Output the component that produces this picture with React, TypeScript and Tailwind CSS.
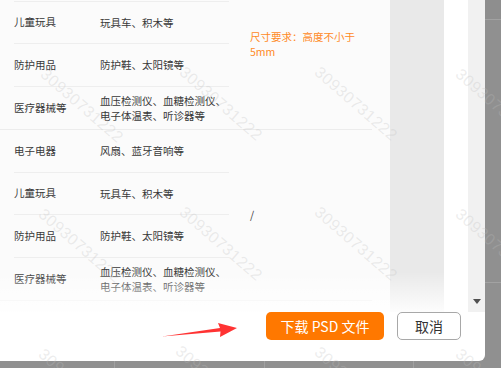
import React from "react";

type Item = { name: string; lines: string[] };

const rows: Item[] = [
  { name: "电子电器", lines: ["风扇、蓝牙音响等"] },
  { name: "儿童玩具", lines: ["玩具车、积木等"] },
  { name: "防护用品", lines: ["防护鞋、太阳镜等"] },
  { name: "医疗器械等", lines: ["血压检测仪、血糖检测仪、", "电子体温表、听诊器等"] },
];

const marks = [
  { x: 48, y: 66 },
  { x: 187, y: 64 },
  { x: 322, y: 64 },
  { x: 463, y: 66 },
  { x: 46, y: 206 },
  { x: 187, y: 204 },
  { x: 322, y: 204 },
  { x: 463, y: 206 },
  { x: 46, y: 346 },
  { x: 183, y: 343 },
  { x: 322, y: 344 },
  { x: 463, y: 346 },
];

const Group = ({ children, first }: { children: React.ReactNode; first?: boolean }) => (
  <div className={`flex border-b border-[#ececec] ${first ? "mt-[-41px]" : ""}`}>
    <div className="ml-[14px] w-[215px] flex flex-col">
      {rows.map((r, i) => (
        <div
          key={i}
          className={`h-[42.5px] flex items-center ${i < rows.length - 1 ? "border-b border-[#eeeeee]" : ""}`}
        >
          <div className="w-[86px] shrink-0">{r.name}</div>
          <div className="flex flex-col leading-[15px]">
            {r.lines.map((l, j) => (
              <span key={j}>{l}</span>
            ))}
          </div>
        </div>
      ))}
    </div>
    <div className="flex-1 flex items-center pl-[21px]">{children}</div>
  </div>
);

export default function App() {
  return (
    <div className="relative w-[501px] h-[368px] overflow-hidden bg-[#909090] flex flex-col font-['Noto_Sans_CJK_SC',sans-serif]">
      <div className="flex h-[361px]">
        {/* modal */}
        <div className="relative w-[485px] h-full bg-white rounded-br-[6px] flex flex-col">
          <div className="flex h-[312px]">
            <div className="relative w-[468px] h-full overflow-hidden flex">
              <div className="w-[390px] h-full bg-[#fbfbfb] text-[10.5px] text-[#383838]">
                <div className="w-[372px]">
                  <Group first>
                    <div className="text-[#ff8a1f] leading-[15px] w-[110px]">
                      尺寸要求：高度不小于 5mm
                    </div>
                  </Group>
                  <Group>
                    <span>/</span>
                  </Group>
                </div>
              </div>
              <div className="w-[54px] h-full bg-[#e9e9e9]" />
              <div className="flex-1 h-full bg-white" />
              {/* bottom fade */}
              <div className="absolute left-0 right-0 bottom-0 h-[40px] bg-linear-to-b from-white/0 to-white/90" />
            </div>
            {/* scrollbar */}
            <div className="w-[17px] h-full bg-[#f1f1f1] flex flex-col justify-end items-center pb-[8px]">
              <svg width="8" height="5" viewBox="0 0 8 5">
                <path d="M0 0 L8 0 L4 5 Z" fill="#505050" />
              </svg>
            </div>
          </div>
          {/* footer */}
          <div className="flex justify-end gap-[13px] pr-[24px]">
            <button className="w-[118px] h-[28px] rounded-[5px] bg-[#ff7800] text-white text-[14px] leading-none">
              下载 PSD 文件
            </button>
            <button className="w-[64px] h-[28px] rounded-[5px] border border-[#a8a8a8] bg-white text-[#333] text-[14px] leading-none">
              取消
            </button>
          </div>
          {/* annotation arrow */}
          <svg
            className="absolute left-[160px] top-[320px]"
            width="80"
            height="20"
            viewBox="0 0 80 20"
          >
            <path d="M2 16.5 L60 8 L58 3 L77 8 L60 17 L60.5 11.5 Z" fill="#ff3333" />
          </svg>
        </div>
        {/* right overlay strip */}
        <div className="flex-1 flex flex-col">
          <div className="h-[20px] bg-[#8e8e8e] border-b border-[#a2a2a2]" />
          <div className="h-[263px] border-b border-[#a2a2a2]" />
          <div className="flex-1" />
        </div>
      </div>
      {/* bottom overlay strip */}
      <div className="flex-1 flex">
        <div className="w-[115px] border-r border-[#a0a0a0]" />
        <div className="w-[150px] border-r border-[#a0a0a0]" />
        <div className="w-[149px] border-r border-[#a0a0a0]" />
        <div className="flex-1" />
      </div>
      {/* watermark layer */}
      <div className="absolute inset-0 pointer-events-none">
        {marks.map((m, i) => (
          <div
            key={i}
            className="absolute origin-top-left rotate-[41deg] text-[16px] leading-none tracking-[0.5px] text-[rgba(190,190,190,0.28)] font-['Liberation_Sans',sans-serif]"
            style={{ left: m.x, top: m.y }}
          >
            30930731222
          </div>
        ))}
      </div>
    </div>
  );
}
